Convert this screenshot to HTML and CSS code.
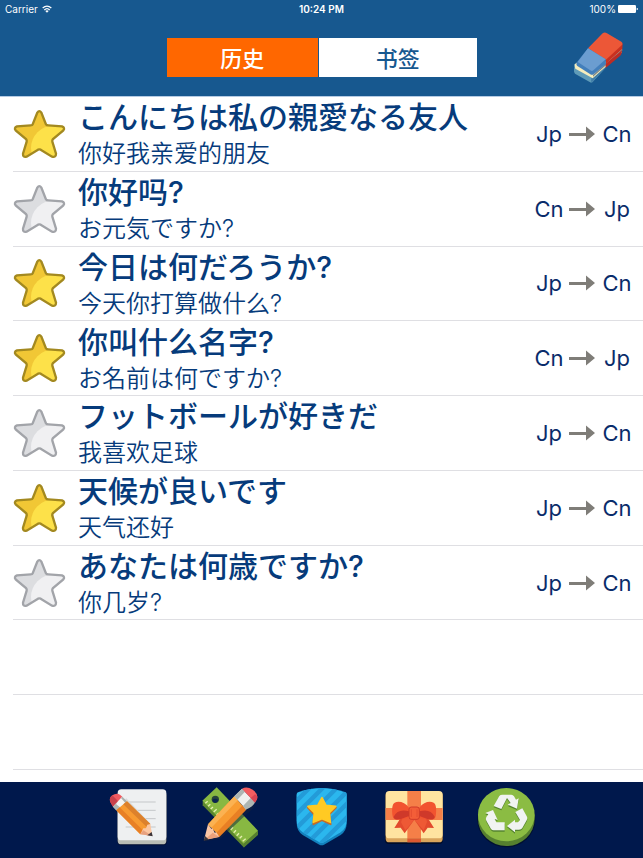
FILE: index.html
```html
<!DOCTYPE html>
<html lang="zh-CN">
<head>
<meta charset="utf-8">
<meta name="viewport" content="width=device-width, initial-scale=1">
<title>历史</title>
<link rel="stylesheet" href="styles.css">
</head>
<body>
<svg class="defs" aria-hidden="true">
  <defs>
    <path id="star-shape" d="M112 54Q118 45 124 54L138 89Q140 92 145 92L186 95Q196 99 190 107L159 133Q156 137 157 141L168 177Q168 189 156 186L122 165Q118 163 114 165L80 186Q68 189 69 177L80 141Q81 137 78 133L47 107Q41 99 51 95L92 92Q97 92 98 89Z"/>
    <clipPath id="star-clip"><use href="#star-shape"/></clipPath>
    <symbol id="star" viewBox="39 43 159 150">
      <use href="#star-shape" class="star-base"/>
      <circle cx="160" cy="160" r="67" class="star-light" clip-path="url(#star-clip)"/>
      <use href="#star-shape" class="star-line"/>
    </symbol>
    <symbol id="arrow" viewBox="0 0 28 18">
      <path d="M0 8h17V1.500L26 9 17 16.500V11H0z" fill="#7f7d78"/>
    </symbol>
  </defs>
</svg>

<header class="header">
  <div class="status">
    <span class="carrier">Carrier
      <svg class="wifi" viewBox="0 0 30 24" aria-hidden="true"><g fill="none" stroke="#fff" stroke-width="4"><path d="M2 9Q15-2 28 9"/><path d="M7 15Q15 7 23 15"/></g><path d="M10 18Q15 14 20 18L15 23z" fill="#fff"/></svg>
    </span>
    <time class="clock">10:24 PM</time>
    <span class="power">100%
      <svg class="battery" viewBox="0 0 60 24" aria-hidden="true"><rect width="54" height="24" rx="4" fill="#fff"/><path d="M56 8q4 1 4 4t-4 4z" fill="#fff"/></svg>
    </span>
  </div>
  <div class="toolbar">
    <div class="segments">
      <button class="segment active" type="button" aria-pressed="true">历史</button>
      <button class="segment" type="button" aria-pressed="false">书签</button>
    </div>
    <button class="eraser" type="button" aria-label="清除">
      <svg viewBox="36 32 156 162" aria-hidden="true">
        <path d="M42 152L44 134 96 164 137 134V145L98 188Q94 191 89 188L45 163Q41 160 42 152z" fill="#5f9bb8"/>
        <path d="M96 165L138 128V144L99 186Q95 190 93 186z" fill="#417ea8"/>
        <path d="M44 135L53 128 98 160 186 84V99L98 177 46 148Q43 142 44 135z" fill="#f6edbd"/>
        <path d="M99 167L187 89V94L99 172z" fill="#7d8588"/>
        <path d="M137 119L188 72 187 89 137 134z" fill="#c93120"/>
        <path d="M137 133L186 93Q186 106 179 111L137 146z" fill="#bd2c24"/>
        <path d="M84 87L128 42Q134 37 141 42L184 67Q190 72 185 78L137 122z" fill="#ec5737"/>
        <path d="M84 87L137 120 138 134 101 165Q96 168 91 165L51 139Q47 134 51 128z" fill="#437fbb"/>
        <path d="M84 87L137 120 100 153Q96 157 91 153L53 128z" fill="#6b9dd0"/>
      </svg>
    </button>
  </div>
</header>

<main class="content">
  <ul class="list">
    <li class="row">
      <button class="star on" type="button" aria-label="收藏" aria-pressed="true"><svg><use href="#star"/></svg></button>
      <div class="phrase"><strong class="source" lang="ja">こんにちは私の親愛なる友人</strong><span class="translation">你好我亲爱的朋友</span></div>
      <div class="direction"><span>Jp</span><svg><use href="#arrow"/></svg><span>Cn</span></div>
    </li>
    <li class="row">
      <button class="star" type="button" aria-label="收藏" aria-pressed="false"><svg><use href="#star"/></svg></button>
      <div class="phrase"><strong class="source">你好吗?</strong><span class="translation" lang="ja">お元気ですか?</span></div>
      <div class="direction"><span>Cn</span><svg><use href="#arrow"/></svg><span>Jp</span></div>
    </li>
    <li class="row">
      <button class="star on" type="button" aria-label="收藏" aria-pressed="true"><svg><use href="#star"/></svg></button>
      <div class="phrase"><strong class="source" lang="ja">今日は何だろうか?</strong><span class="translation">今天你打算做什么?</span></div>
      <div class="direction"><span>Jp</span><svg><use href="#arrow"/></svg><span>Cn</span></div>
    </li>
    <li class="row">
      <button class="star on" type="button" aria-label="收藏" aria-pressed="true"><svg><use href="#star"/></svg></button>
      <div class="phrase"><strong class="source">你叫什么名字?</strong><span class="translation" lang="ja">お名前は何ですか?</span></div>
      <div class="direction"><span>Cn</span><svg><use href="#arrow"/></svg><span>Jp</span></div>
    </li>
    <li class="row">
      <button class="star" type="button" aria-label="收藏" aria-pressed="false"><svg><use href="#star"/></svg></button>
      <div class="phrase"><strong class="source" lang="ja">フットボールが好きだ</strong><span class="translation">我喜欢足球</span></div>
      <div class="direction"><span>Jp</span><svg><use href="#arrow"/></svg><span>Cn</span></div>
    </li>
    <li class="row">
      <button class="star on" type="button" aria-label="收藏" aria-pressed="true"><svg><use href="#star"/></svg></button>
      <div class="phrase"><strong class="source" lang="ja">天候が良いです</strong><span class="translation">天气还好</span></div>
      <div class="direction"><span>Jp</span><svg><use href="#arrow"/></svg><span>Cn</span></div>
    </li>
    <li class="row">
      <button class="star" type="button" aria-label="收藏" aria-pressed="false"><svg><use href="#star"/></svg></button>
      <div class="phrase"><strong class="source" lang="ja">あなたは何歳ですか?</strong><span class="translation">你几岁?</span></div>
      <div class="direction"><span>Jp</span><svg><use href="#arrow"/></svg><span>Cn</span></div>
    </li>
    <li class="row" aria-hidden="true"></li>
    <li class="row" aria-hidden="true"></li>
  </ul>
</main>

<nav class="tabs">
  <button class="tab" type="button" aria-label="笔记">
    <svg viewBox="7 6 240 228" aria-hidden="true">
      <rect x="65" y="38" width="149" height="158" rx="12" fill="#000d2f"/>
      <rect x="66" y="34" width="146" height="159" rx="11" fill="#b9bdb5"/>
      <rect x="66" y="28" width="146" height="153" rx="11" fill="#eef0f1"/>
      <path d="M90 66H180M90 91H180M90 116H180M90 141H180" stroke="#c4c7c9" stroke-width="3"/>
      <path d="M59 84L136 163 170 168 168 160 162 128 92 55z" fill="#d8dadb"/>
      <path d="M44 66Q39 54 50 46 62 38 73 44L80 50 52 80z" fill="#f05a60"/>
      <path d="M44 66Q39 54 50 46L66 62 52 80z" fill="#c8414c"/>
      <path d="M52 80L80 50 94 64 62 91z" fill="#f5f5f3"/>
      <path d="M52 80L60 71 73 82 62 91z" fill="#b0b6b4"/>
      <path d="M76 54L80 50 94 64 89 69z" fill="#abb0ae"/>
      <path d="M62 91L94 64 164 132 134 163z" fill="#f79a31"/>
      <path d="M62 91L72 82 144 153 134 163z" fill="#e88025"/>
      <path d="M83 73L94 64 164 132 154 142z" fill="#dc812c"/>
      <path d="M134 163L143 145 151 145 155 134 164 132 170 168z" fill="#fbc6a1"/>
      <path d="M134 163L143 151 170 168z" fill="#e7a17f"/>
      <path d="M155 166L168 156 171 169z" fill="#3b353a"/>
    </svg>
  </button>
  <button class="tab" type="button" aria-label="工具">
    <svg viewBox="-1 6 240 228" aria-hidden="true">
      <path d="M37 64L37 76 160 202 203 164V154z" fill="#5c852f"/>
      <path d="M79 22L203 152 160 191 36 62z" fill="#88b842"/>
      <path d="M160 191L203 152V164L160 203z" fill="#568031"/>
      <ellipse cx="75" cy="58" rx="11" ry="11" fill="#27443b"/>
      <path d="M66 60q8-7 18 0-3 9-10 9-7-1-8-9" fill="#0a2450"/>
      <path d="M45 70l7-6M53 79l7-6M61 87l7-6M70 96l9-8M79 105l6-6M121 149l7-7M130 158l7-7M139 167l7-7M148 175l7-7M157 184l9-8" stroke="#e6efaf" stroke-width="4"/>
      <path d="M44 184L60 133 142 45 193 80 90 176z" fill="#15223c" opacity=".5"/>
      <path d="M53 133L132 49 165 87 87 168z" fill="#f89c32"/>
      <path d="M53 133L132 49 143 60 63 143z" fill="#fbb252"/>
      <path d="M77 160L157 76 168 89 87 171z" fill="#e87f24"/>
      <path d="M53 133L41 180 87 170 78 157 73 158 67 145 63 146z" fill="#fbc6a4"/>
      <path d="M41 181L67 158 87 171z" fill="#eca17b"/>
      <path d="M44 168L40 182 56 179z" fill="#3a353b"/>
      <path d="M132 49L155 26 190 62 167 88z" fill="#f0f1ef"/>
      <path d="M132 49L155 26 164 35 141 59zM158 78L181 54 194 67Q190 80 166 89z" fill="#aeb6b3"/>
      <path d="M155 26Q169 17 187 29 205 42 200 58L194 68z" fill="#f45d60"/>
      <path d="M181 54L194 43 201 49 200 58 193 67z" fill="#d94452"/>
    </svg>
  </button>
  <button class="tab" type="button" aria-label="收藏夹">
    <svg viewBox="-10 6 240 228" aria-hidden="true">
      <clipPath id="shield"><path d="M34 42Q34 38 40 36Q76 24 109 24T178 36Q184 38 184 42V121Q184 145 166 157L116 187Q109 190 102 187L52 157Q34 145 34 121z"/></clipPath>
      <path d="M34 44H184V130Q184 153 166 165L116 194Q109 198 102 194L52 165Q34 153 34 130z" fill="#1381bd"/>
      <path d="M34 42Q34 38 40 36Q76 24 109 24T178 36Q184 38 184 42V121Q184 145 166 157L116 187Q109 190 102 187L52 157Q34 145 34 121z" fill="#2bb7ee"/>
      <path d="M20 76L82 14M20 116L126 10M20 158L174 4M36 184L192 28M66 190L202 54M90 207L204 93" stroke="#239bd8" stroke-width="13" clip-path="url(#shield)"/>
      <path d="M110 57L122 79 152 83 132 103 136 133 110 121 84 133 86 103 67 83 97 79z" fill="#c86b24" stroke="#c86b24" stroke-width="5" stroke-linejoin="round"/>
      <path d="M110 53L122 76 151 79 132 98 135 127 110 116 84 127 87 98 68 79 97 76z" fill="#ffca23" stroke="#ffca23" stroke-width="5" stroke-linejoin="round"/>
    </svg>
  </button>
  <button class="tab" type="button" aria-label="礼物">
    <svg viewBox="-5 6 240 228" aria-hidden="true">
      <rect x="28" y="36" width="174" height="156" rx="12" fill="#000c28"/>
      <rect x="30" y="36" width="171" height="151" rx="11" fill="#d9a55c"/>
      <rect x="30" y="33" width="171" height="142" rx="11" fill="#ffe4a0"/>
      <path d="M95 33H136V175H95zM30 84H201V120H30z" fill="#f57f48"/>
      <path d="M95 175H136V187H95z" fill="#dc5931"/>
      <path d="M99 113L77 110 56 144 75 143 87 160 116 119 144 160 156 143 175 144 154 110z" fill="#e24a2d"/>
      <path d="M99 113L82 110 76 127 89 151 116 119 144 151 154 126 150 110z" fill="#ee5935"/>
      <path d="M100 83C88 67 70 62 57 68 49 72 48 91 51 109 54 121 64 119 74 118 86 117 94 115 100 111z" fill="#f2532f"/>
      <path d="M131 83C143 67 161 62 174 68 182 72 183 91 180 109 177 121 167 119 157 118 145 117 137 115 131 111z" fill="#f2532f"/>
      <path d="M54 110Q67 84 100 94V108L76 117Q55 122 54 110zM177 110Q164 84 131 94V108L155 117Q176 122 177 110z" fill="#cf392a"/>
      <rect x="100" y="81" width="31" height="37" rx="7" fill="#f35e38" stroke="#cf3b29" stroke-width="3"/>
      <path d="M107 88V111M124 88V111" stroke="#dd452e" stroke-width="2"/>
    </svg>
  </button>
  <button class="tab" type="button" aria-label="回收">
    <svg viewBox="1 6 240 228" aria-hidden="true">
      <ellipse cx="122" cy="119" rx="87" ry="83" fill="#001031"/>
      <path d="M37 104H207V117A85 81 0 0 1 37 117z" fill="#56802f"/>
      <ellipse cx="122" cy="104" rx="85" ry="80" fill="#8bbc43"/>
      <g fill="#55842f" transform="translate(0 4)">
        <path id="recycle-top" d="M84 78L101 48Q104 44 110 44H137Q142 44 145 49L151 59 159 55 154 86 126 74 135 69 124 54 107 87z"/>
        <path id="recycle-left" d="M59 99L82 90 96 120 87 117 92 127H117V151H84Q79 151 76 147L62 122Q59 117 62 111L68 103z"/>
        <path id="recycle-right" d="M149 96L170 85 184 110Q186 115 183 121L170 144Q167 149 160 149H148V157L124 138 148 119V127H157L163 120z"/>
      </g>
      <g fill="#f1f3f2"><use href="#recycle-top"/><use href="#recycle-left"/><use href="#recycle-right"/></g>
    </svg>
  </button>
</nav>
</body>
</html>
```

FILE: styles.css
```css
* {
  box-sizing: border-box;
}

body {
  margin: 0;
  min-height: 100vh;
  display: flex;
  flex-direction: column;
  background: #fff;
  color: #063b7b;
  font-family: Inter, "Noto Sans CJK SC", sans-serif;
}

button {
  margin: 0;
  padding: 0;
  border: 0;
  background: none;
  color: inherit;
  font: inherit;
  cursor: pointer;
}

svg {
  display: block;
}

.defs {
  position: absolute;
  width: 0;
  height: 0;
}

.header {
  background: #17588f;
  color: #fff;
  border-bottom: 1px solid #b5cbe4;
}

.status {
  display: grid;
  grid-template-columns: 1fr auto 1fr;
  align-items: center;
  height: 18px;
  padding: 0 5px;
  font-size: 10px;
}

.carrier,
.power {
  display: flex;
  align-items: center;
  gap: 4px;
}

.power {
  justify-content: flex-end;
  gap: 2px;
}

.clock {
  font-weight: 600;
}

.wifi {
  width: 10px;
  height: 8px;
}

.battery {
  width: 20px;
  height: 8px;
}

.toolbar {
  display: grid;
  grid-template-columns: 1fr 310px 1fr;
  align-items: center;
  height: 78px;
  padding: 0 19px;
}

.segments {
  grid-column: 2;
  display: grid;
  grid-template-columns: 24fr 25fr;
  gap: 1px;
  height: 39px;
}

.segment {
  background: #fff;
  color: #17588f;
  font-size: 22px;
  font-weight: 500;
}

.segment.active {
  background: #ff6700;
  color: #fff;
}

.eraser {
  justify-self: end;
}

.eraser svg {
  width: 52px;
  height: 54px;
}

.content {
  flex: 1;
  display: flex;
  padding: 0 0 12px 13px;
}

.list {
  flex: 1;
  display: grid;
  grid-auto-rows: 1fr;
  margin: 0;
  padding: 0;
  list-style: none;
}

.row {
  display: flex;
  align-items: center;
  gap: 12px;
  padding-right: 10px;
  border-bottom: 1px solid #dfdfe3;
}

.star svg {
  width: 53px;
  height: 50px;
  fill: #dcdde0;
  stroke: #a2a4a9;
  --light: #f0f0f2;
}

.star.on svg {
  fill: #f1c735;
  stroke: #a38920;
  --light: #fde149;
}

.star-base {
  stroke: none;
}

.star-light {
  fill: var(--light);
  stroke: none;
}

.star-line {
  fill: none;
  stroke-width: 7px;
}

.phrase {
  flex: 1;
  display: flex;
  flex-direction: column;
  gap: 1px;
}

.phrase [lang="ja"] {
  font-family: Inter, "Noto Sans CJK JP", sans-serif;
}

.source {
  font-size: 30px;
  line-height: 40px;
  font-weight: 500;
}

.translation {
  font-size: 24px;
  line-height: 32px;
  font-weight: 350;
}

.direction {
  display: grid;
  grid-template-columns: 32px 28px 32px;
  gap: 4px;
  align-items: center;
  color: #0a2c6b;
  font-size: 22px;
  text-align: center;
}

.direction svg {
  width: 28px;
  height: 18px;
}

.tabs {
  display: flex;
  justify-content: center;
  gap: 12px;
  background: #00184c;
}

.tab svg {
  width: 80px;
  height: 76px;
}
```
